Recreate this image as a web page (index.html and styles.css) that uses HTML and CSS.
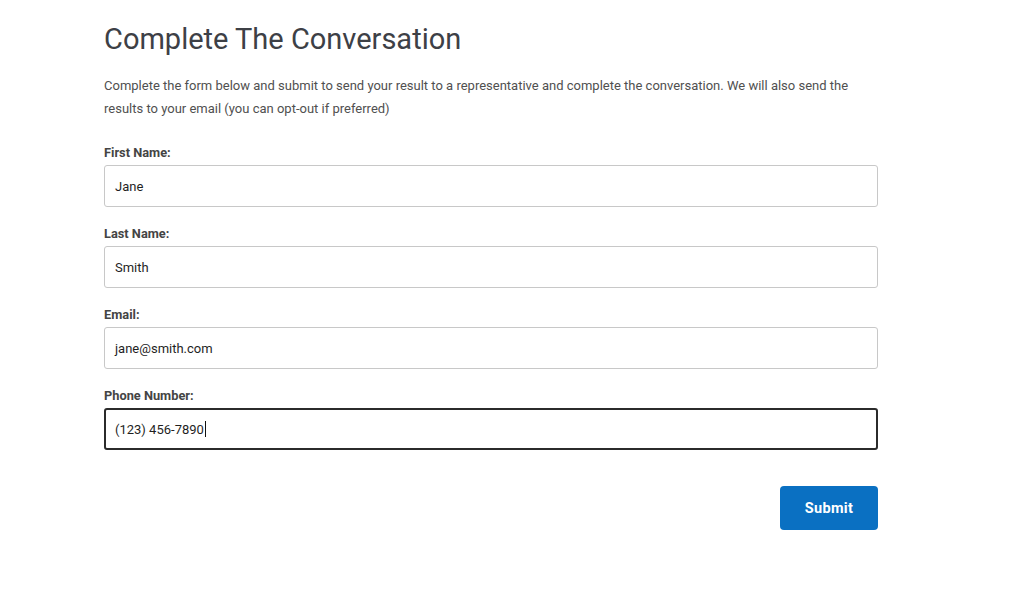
FILE: index.html
```html
<!DOCTYPE html>
<html>
<head>
<meta charset="utf-8">
<link rel="stylesheet" href="styles.css">
</head>
<body>
<main class="page">
  <h1 class="title">Complete The Conversation</h1>
  <p class="intro">Complete the form below and submit to send your result to a representative and complete the conversation. We will also send the results to your email (you can opt-out if preferred)</p>
  <form class="form">
    <div class="field">
      <label class="label">First Name:</label>
      <div class="input">Jane</div>
    </div>
    <div class="field">
      <label class="label">Last Name:</label>
      <div class="input">Smith</div>
    </div>
    <div class="field">
      <label class="label">Email:</label>
      <div class="input">jane@smith.com</div>
    </div>
    <div class="field">
      <label class="label">Phone Number:</label>
      <div class="input input-focus">(123) 456-7890<span class="caret"></span></div>
    </div>
    <div class="actions">
      <button type="button" class="submit">Submit</button>
    </div>
  </form>
</main>
</body>
</html>
```

FILE: styles.css
```css
html, body {
  margin: 0;
  padding: 0;
  background: #ffffff;
}
body {
  font-family: Roboto, "Liberation Sans", sans-serif;
}
.page {
  width: 774px;
  padding: 20px 0 0 104px;
}
.title {
  margin: 0;
  font-size: 29px;
  font-weight: 400;
  line-height: 38px;
  color: #3d4046;
}
.intro {
  margin: 16px 0 0 0;
  font-size: 13px;
  line-height: 23px;
  color: #505050;
  padding-right: 24px;
}
.form {
  margin-top: 25px;
  display: flex;
  flex-direction: column;
  gap: 19px;
}
.field {
  display: flex;
  flex-direction: column;
  gap: 5px;
}
.label {
  font-size: 12.8px;
  font-weight: 700;
  line-height: 15px;
  color: #444444;
}
.input {
  box-sizing: border-box;
  height: 42px;
  border: 1px solid #c8c8c8;
  border-radius: 3px;
  padding: 0 10px;
  display: flex;
  align-items: center;
  font-size: 13px;
  color: #1f1f1f;
  font-family: Roboto, "Liberation Sans", sans-serif;
}
.input-focus {
  border: 2px solid #2b2b2b;
  padding: 0 9px;
}
.caret {
  display: inline-block;
  width: 1px;
  height: 16px;
  background: #111;
  margin-left: 1px;
}
.actions {
  display: flex;
  justify-content: flex-end;
  margin-top: 17px;
}
.submit {
  width: 98px;
  height: 44px;
  border: none;
  border-radius: 4px;
  background: #0a70c2;
  color: #ffffff;
  font-family: Roboto, "Liberation Sans", sans-serif;
  font-size: 14.5px;
  font-weight: 700;
  letter-spacing: 0.3px;
  cursor: pointer;
}
```
